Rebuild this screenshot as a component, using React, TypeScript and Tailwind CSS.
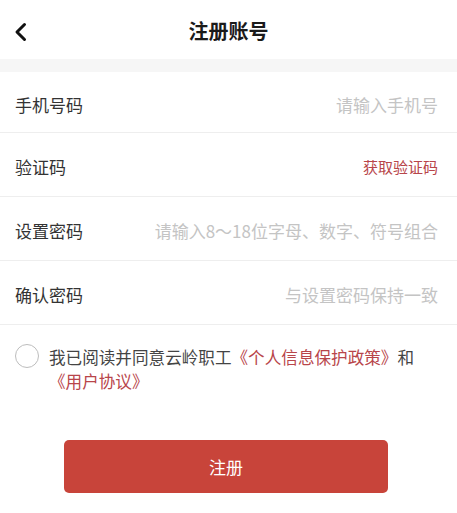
import React from "react";

const font = { fontFamily: '"Noto Sans CJK SC", "Noto Sans", sans-serif' };

function Row({ label, right, red }: { label: string; right: string; red?: boolean }) {
  return (
    <div className="flex h-[64px] items-center justify-between border-b border-[#eeeeee] pl-[15px] pr-[19px] pt-[5px]">
      <span className="text-[17px] text-[#333333]">{label}</span>
      <span className={red ? "text-[15px] text-[#b8454a]" : "text-[17px] text-[#c4c4c4]"}>{right}</span>
    </div>
  );
}

export default function App() {
  return (
    <div className="flex h-[513px] w-[457px] flex-col bg-white" style={font}>
      <div className="relative flex h-[59px] items-center justify-center pt-[3px]">
        <svg className="absolute left-[14px] top-[22px]" width="14" height="20" viewBox="0 0 14 20" fill="none">
          <path d="M10.5 2.5L3 10l7.5 7.5" stroke="#111" strokeWidth="3" strokeLinecap="round" strokeLinejoin="round" />
        </svg>
        <span className="text-[20px] font-bold text-[#1a1a1a]">注册账号</span>
      </div>
      <div className="h-[13px] bg-[#f6f6f6]" />
      <div className="flex h-[61px] items-center justify-between border-b border-[#eeeeee] pl-[15px] pr-[19px] pt-[5px]">
        <span className="text-[17px] text-[#333333]">手机号码</span>
        <span className="text-[17px] text-[#c4c4c4]">请输入手机号</span>
      </div>
      <Row label="验证码" right="获取验证码" red />
      <Row label="设置密码" right="请输入8～18位字母、数字、符号组合" />
      <Row label="确认密码" right="与设置密码保持一致" />
      <div className="flex items-start pl-[15px] pr-[20px] pt-[19px]">
        <div className="mr-[10px] h-[24px] w-[24px] shrink-0 rounded-full border-[1.5px] border-[#bdbdbd]" />
        <p className="pt-[1px] text-[16.6px] leading-[24px] text-[#444444]">
          我已阅读并同意云岭职工<span className="text-[#b8454a]">《个人信息保护政策》</span>和
          <span className="text-[#b8454a]">《用户协议》</span>
        </p>
      </div>
      <div className="flex justify-center pr-[5px] pt-[47px]">
        <button className="flex h-[53px] w-[324px] items-center justify-center rounded-[5px] bg-[#c8443a] text-[17px] text-white">
          注册
        </button>
      </div>
    </div>
  );
}
